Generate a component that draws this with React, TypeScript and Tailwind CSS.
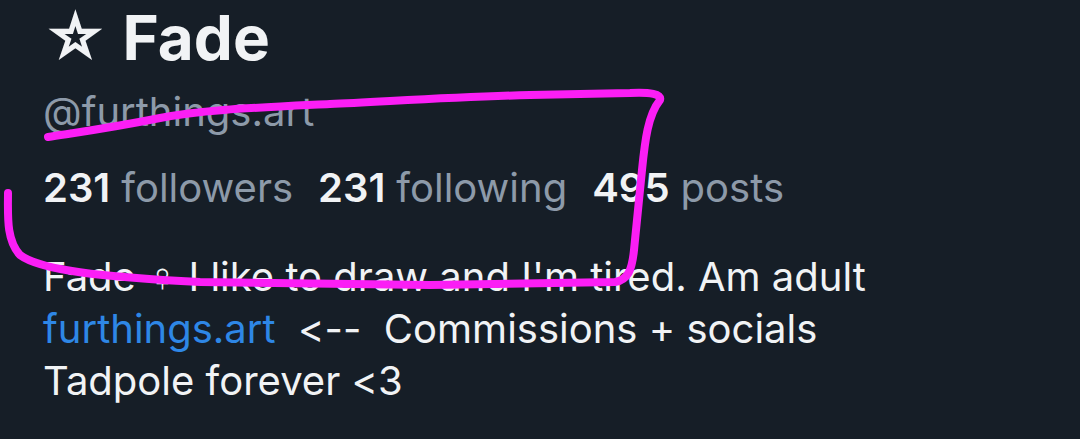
import React from "react";

const stats = [
    { count: "231", label: "followers" },
    { count: "231", label: "following" },
    { count: "495", label: "posts" },
];

const Scribble = () => {
    return (
        <svg className="pointer-events-none absolute left-0 top-0" width="1080" height="439" viewBox="0 0 1080 439" fill="none">
            <path
                d="M 8 193 C 8 215, 6 240, 20 255 C 40 270, 100 277, 200 282 L 430 285 L 615 282 C 628 280, 632 270, 634 250 L 642 170 C 645 140, 648 115, 660 100 C 662 94, 650 92, 630 93 L 530 95 C 450 97, 380 102, 330 104 C 250 108, 200 110, 160 118 C 110 128, 80 132, 48 137"
                stroke="#fb1ef5"
                strokeWidth="8"
                strokeLinecap="round"
                strokeLinejoin="round"
            />
        </svg>
    );
};

export default function App() {
    return (
        <div className="relative w-[1080px] h-[439px] overflow-hidden bg-[#161e27] font-['Inter','Noto_Sans',sans-serif] [font-feature-settings:'calt'_0] [font-variant-ligatures:none]">
            <div className="flex flex-col pl-[43px]">
                <h1 className="text-[62px] leading-[76px] font-bold text-[#f1f3f5]">☆ Fade</h1>
                <div className="text-[40px] leading-[48px] text-[#8d9aa9] mt-[12px]">@furthings.art</div>
                <div className="flex items-baseline gap-[25px] mt-[28px] text-[40px] leading-[48px]">
                    {stats.map((s, i) => (
                        <div key={i} className="flex items-baseline gap-[11px]">
                            <span className="font-semibold text-[#f1f3f5]">{s.count}</span>
                            <span className="text-[#8d9aa9]">{s.label}</span>
                        </div>
                    ))}
                </div>
                <div className="mt-[39px] text-[40px] leading-[52px] text-[#f1f3f5]">
                    <p>Fade ♀ I like to draw and I'm tired. Am adult</p>
                    <p>
                        <span className="text-[#2e87e6]">furthings.art</span>
                        <span className="whitespace-pre">{"  <--  Commissions + socials"}</span>
                    </p>
                    <p>Tadpole forever &lt;3</p>
                </div>
            </div>
            <Scribble />
        </div>
    );
}
